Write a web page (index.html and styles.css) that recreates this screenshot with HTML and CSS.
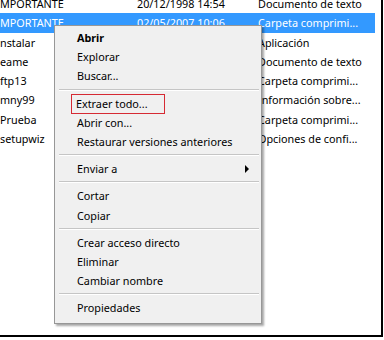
FILE: index.html
```html
<!DOCTYPE html>
<html lang="es">
<head>
    <meta charset="UTF-8">
    <title>Extraer todo</title>
    <link rel="stylesheet" href="styles.css">
</head>
<body>
    <div class="frame">
        <div class="files">
            <div class="row"><span class="name">MPORTANTE</span><span class="date">20/12/1998 14:54</span><span class="type">Documento de texto</span></div>
            <div class="row selected"><span class="name">MPORTANTE</span><span class="date">02/05/2007 10:06</span><span class="type">Carpeta comprimi...</span></div>
            <div class="row"><span class="name">nstalar</span><span class="date"></span><span class="type">Aplicación</span></div>
            <div class="row"><span class="name">eame</span><span class="date"></span><span class="type">Documento de texto</span></div>
            <div class="row"><span class="name">ftp13</span><span class="date"></span><span class="type">Carpeta comprimi...</span></div>
            <div class="row"><span class="name">mny99</span><span class="date"></span><span class="type">Información sobre...</span></div>
            <div class="row"><span class="name">Prueba</span><span class="date"></span><span class="type">Carpeta comprimi...</span></div>
            <div class="row"><span class="name">setupwiz</span><span class="date"></span><span class="type">Opciones de confi...</span></div>
        </div>

        <!-- context menu over the file list -->
        <ul class="menu">
            <li class="bold">Abrir</li>
            <li>Explorar</li>
            <li>Buscar...</li>
            <li class="sep"></li>
            <li><span class="mark">Extraer todo...</span></li>
            <li>Abrir con...</li>
            <li>Restaurar versiones anteriores</li>
            <li class="sep"></li>
            <li class="sub">Enviar a</li>
            <li class="sep"></li>
            <li>Cortar</li>
            <li>Copiar</li>
            <li class="sep"></li>
            <li>Crear acceso directo</li>
            <li>Eliminar</li>
            <li>Cambiar nombre</li>
            <li class="sep"></li>
            <li>Propiedades</li>
        </ul>
    </div>
</body>
</html>
```

FILE: styles.css
```css
body {
    margin: 0;
    background: #fff;
    font-family: "Noto Sans", sans-serif;
    font-size: 10.8px;
    color: #000;
}
.frame {
    position: relative;
    width: 381px;
    height: 335px;
    border-right: 2px solid #000;
    border-bottom: 2px solid #000;
    overflow: hidden;
}
.files {
    width: 375px;
    margin-top: -6px;
}
.row {
    display: flex;
    height: 19.3px;
    line-height: 19px;
    white-space: nowrap;
}
.row.selected {
    background: #3399ff;
    color: #fff;
}
.name {
    width: 137px;
}
.date {
    width: 121px;
}
.type {
    flex: 1;
}
.menu {
    position: absolute;
    left: 54px;
    top: 25px;
    width: 202px;
    margin: 0;
    padding: 2px 2px 6px 2px;
    list-style: none;
    background: #f0f0f0;
    border: 1px solid #979797;
    box-shadow: 2px 2px 2px rgba(0, 0, 0, 0.35);
}
.menu li {
    position: relative;
    height: 19.2px;
    line-height: 19px;
    padding-left: 20px;
    white-space: nowrap;
}
.menu li.bold {
    font-weight: bold;
}
.menu li.sep {
    height: 0;
    margin: 3px 0 3px 2px;
    padding: 0;
    border-top: 1px solid #c5c5c5;
    border-bottom: 1px solid #fff;
}
.menu li.sub::after {
    content: "";
    position: absolute;
    right: 10px;
    top: 6px;
    border-left: 4px solid #000;
    border-top: 4px solid transparent;
    border-bottom: 4px solid transparent;
}
.mark {
    display: inline-block;
    margin-left: -6px;
    padding: 0 16px 0 4px;
    line-height: 18px;
    border: 1px solid #d62a33;
}
```
